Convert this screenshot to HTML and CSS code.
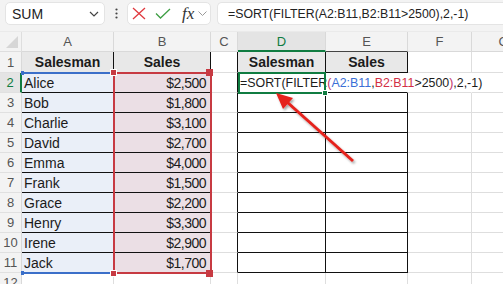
FILE: index.html
```html
<!DOCTYPE html>
<html>
<head>
<meta charset="utf-8">
<link rel="stylesheet" href="styles.css">
</head>
<body>
<div class="toolbar">
  <div class="namebox"><span>SUM</span>
    <svg width="10" height="6" viewBox="0 0 10 6"><path d="M1 1 L5 5 L9 1" fill="none" stroke="#444" stroke-width="1.2"/></svg>
  </div>
  <div class="dots"><svg width="3" height="11" viewBox="0 0 3 11"><circle cx="1.5" cy="1.5" r="1.1" fill="#444"/><circle cx="1.5" cy="5.5" r="1.1" fill="#444"/><circle cx="1.5" cy="9.5" r="1.1" fill="#444"/></svg></div>
  <div class="fbtns">
    <svg class="ic-x" width="14" height="13" viewBox="0 0 14 13"><path d="M1 1 L13 12 M13 1 L1 12" stroke="#e0393e" stroke-width="1.3" fill="none"/></svg>
    <svg class="ic-ok" width="16" height="11" viewBox="0 0 16 11"><path d="M1 5.5 L5.5 10 L15 1" stroke="#3f9f45" stroke-width="1.3" fill="none"/></svg>
    <span class="fx">fx</span>
    <svg class="ic-dd" width="9" height="5" viewBox="0 0 9 5"><path d="M0.5 0.5 L4.5 4.5 L8.5 0.5" fill="none" stroke="#9a9a9a" stroke-width="1"/></svg>
  </div>
  <div class="fbar">=SORT(FILTER(A2:B11,B2:B11&gt;2500),2,-1)</div>
</div>
<div class="band"></div>
<div class="stack">
<div class="sheet">
  <div class="corner"></div><div class="ch">A</div><div class="ch">B</div><div class="ch">C</div><div class="ch sel">D</div><div class="ch ch-e">E</div><div class="ch">F</div><div class="ch">G</div>

  <div class="rh">1</div><div class="hd">Salesman</div><div class="hd">Sales</div><div class="c cb"></div><div class="hd">Salesman</div><div class="hd">Sales</div><div class="c"></div><div class="c"></div>

  <div class="rh rsel">2</div><div class="na">Alice</div><div class="sa">$2,500</div><div class="c cb"></div><div class="tb d2"><span class="ftext">=SORT(FILTER<span class="pk">(</span><span class="bl">A2:B11</span>,<span class="rd">B2:B11</span>&gt;2500<span class="pk">)</span>,2,-1)</span></div><div class="tb nr"></div><div class="c nr"></div><div class="c"></div>

  <div class="rh">3</div><div class="na">Bob</div><div class="sa">$1,800</div><div class="c cb"></div><div class="tb"></div><div class="tb"></div><div class="c"></div><div class="c"></div>
  <div class="rh">4</div><div class="na">Charlie</div><div class="sa">$3,100</div><div class="c cb"></div><div class="tb"></div><div class="tb"></div><div class="c"></div><div class="c"></div>
  <div class="rh">5</div><div class="na">David</div><div class="sa">$2,700</div><div class="c cb"></div><div class="tb"></div><div class="tb"></div><div class="c"></div><div class="c"></div>
  <div class="rh">6</div><div class="na">Emma</div><div class="sa">$4,000</div><div class="c cb"></div><div class="tb"></div><div class="tb"></div><div class="c"></div><div class="c"></div>
  <div class="rh">7</div><div class="na">Frank</div><div class="sa">$1,500</div><div class="c cb"></div><div class="tb"></div><div class="tb"></div><div class="c"></div><div class="c"></div>
  <div class="rh">8</div><div class="na">Grace</div><div class="sa">$2,200</div><div class="c cb"></div><div class="tb"></div><div class="tb"></div><div class="c"></div><div class="c"></div>
  <div class="rh">9</div><div class="na">Henry</div><div class="sa">$3,300</div><div class="c cb"></div><div class="tb"></div><div class="tb"></div><div class="c"></div><div class="c"></div>
  <div class="rh">10</div><div class="na">Irene</div><div class="sa">$2,900</div><div class="c cb"></div><div class="tb"></div><div class="tb"></div><div class="c"></div><div class="c"></div>
  <div class="rh">11</div><div class="na">Jack</div><div class="sa">$1,700</div><div class="c cb"></div><div class="tb"></div><div class="tb"></div><div class="c"></div><div class="c"></div>

  <div class="rh">12</div><div class="c"></div><div class="c"></div><div class="c"></div><div class="c"></div><div class="c"></div><div class="c"></div><div class="c"></div>
</div>
<div class="overlay">
  <div class="ref-blue"></div>
  <div class="ref-red"></div>
  <div class="selbox"></div>
</div>
</div>
<svg class="arrow" width="503" height="284" viewBox="0 0 503 284">
  <defs>
    <filter id="sh" x="-20%" y="-20%" width="140%" height="140%">
      <feDropShadow dx="1.5" dy="2" stdDeviation="1" flood-color="#000" flood-opacity="0.35"/>
    </filter>
  </defs>
  <g filter="url(#sh)">
    <line x1="353" y1="161" x2="287" y2="102" stroke="#e5211c" stroke-width="3"/>
    <polygon points="276,93 293,98 283,109" fill="#e5211c"/>
  </g>
</svg>
</body>
</html>
```
FILE: styles.css
```css
html, body {
  margin: 0;
  padding: 0;
  background: #fff;
  overflow: hidden;
  width: 503px;
  height: 284px;
}
body {
  position: relative;
  font-family: "Liberation Sans", Arial, sans-serif;
  color: #1b1b1b;
}
.toolbar {
  display: flex;
  align-items: center;
  height: 27px;
  padding-left: 5px;
  background: #f3f3f3;
}
.namebox {
  width: 100px;
  height: 23px;
  box-sizing: border-box;
  background: #fff;
  border: 1px solid #e4e4e4;
  border-radius: 5px;
  display: flex;
  align-items: center;
  justify-content: space-between;
  padding: 0 5px 0 6px;
  font-size: 14px;
  color: #222;
}
.dots {
  width: 22px;
  display: flex;
  justify-content: center;
}
.fbtns {
  width: 84px;
  height: 23px;
  box-sizing: border-box;
  background: #fff;
  border: 1px solid #e4e4e4;
  border-radius: 5px;
  display: flex;
  align-items: center;
  padding-left: 4px;
}
.ic-x { margin-right: 9px; }
.ic-ok { margin-right: 11px; }
.fx {
  font-family: "Liberation Serif", serif;
  font-style: italic;
  font-size: 17px;
  color: #333;
  margin-right: 4px;
  line-height: 1;
}
.fbar {
  margin-left: 6px;
  flex: 1;
  height: 23px;
  box-sizing: border-box;
  background: #fff;
  border: 1px solid #e4e4e4;
  border-right: none;
  border-radius: 5px 0 0 5px;
  display: flex;
  align-items: center;
  padding-left: 10px;
  font-size: 12.3px;
  color: #222;
  white-space: nowrap;
}
.band {
  height: 5px;
  background: #f3f3f3;
  box-sizing: border-box;
  border-bottom: 1px solid #eaeaea;
}
.stack {
  display: grid;
  width: 536px;
}
.sheet, .overlay {
  grid-area: 1 / 1;
  display: grid;
  grid-template-columns: 22px 92px 97px 27px 88px 82px 64px 64px;
  grid-template-rows: 20px 21px repeat(10, 20px) 20px;
}
.overlay {
  pointer-events: none;
  position: relative;
  z-index: 3;
}
.sheet > div {
  box-sizing: border-box;
  border-right: 1px solid #dedede;
  border-bottom: 1px solid #dedede;
  min-width: 0;
}
.corner {
  background: #f3f3f3;
  position: relative;
}
.corner::after {
  content: "";
  position: absolute;
  right: 3px;
  bottom: 3px;
  width: 0;
  height: 0;
  border-left: 12px solid transparent;
  border-bottom: 12px solid #d6d6d6;
}
.ch {
  background: #f3f3f3;
  color: #555;
  font-size: 13px;
  display: flex;
  align-items: center;
  justify-content: center;
}
.sheet > .ch { border-right-color: #d9d9d9; border-bottom-color: #d9d9d9; }
.sheet > .ch.sel {
  color: #107c41;
  background: #e4e4e4;
  border-bottom: 2px solid #107c41;
}
.sheet > .ch.ch-e { border-bottom-color: #444; }
.rh {
  background: #f3f3f3;
  color: #555;
  font-size: 13px;
  display: flex;
  align-items: center;
  justify-content: center;
}
.sheet > .rh { border-right-color: #d9d9d9; border-bottom-color: #e0e0e0; }
.sheet > .rh.rsel {
  color: #107c41;
  background: #e4e4e4;
  border-right: 2px solid #107c41;
}
.sheet > .hd {
  background: #e8e8e8;
  font-weight: bold;
  font-size: 14px;
  display: flex;
  align-items: center;
  justify-content: center;
  border-right: 1px solid #111;
  border-bottom: 1px solid #111;
}
.sheet > .na {
  background: #eaeff8;
  font-size: 14px;
  display: flex;
  align-items: center;
  padding-left: 2px;
  border-right: 1px solid #111;
  border-bottom: 1px solid #111;
}
.sheet > .sa {
  background: #ebdfe5;
  font-size: 14px;
  letter-spacing: -0.5px;
  display: flex;
  align-items: center;
  justify-content: flex-end;
  padding-right: 4px;
  border-right: 1px solid #111;
  border-bottom: 1px solid #111;
}
.sheet > .cb { border-right: 1px solid #111; }
.sheet > .tb {
  border-right: 1px solid #111;
  border-bottom: 1px solid #111;
}
.sheet > .nr { border-right-color: transparent; }
.d2 {
  position: relative;
  z-index: 2;
  display: flex;
  align-items: center;
  overflow: visible;
}
.ftext {
  white-space: nowrap;
  font-size: 12.4px;
  padding-left: 2px;
  color: #1b1b1b;
}
.pk { color: #c0306a; }
.bl { color: #3b6fd6; }
.rd { color: #d22f45; }
.ref-blue {
  grid-column: 2 / 4;
  grid-row: 3 / 13;
  margin: -1px 0 -1px 0;
  border-top: 2px solid #3b6fc9;
  border-bottom: 2px solid #3b6fc9;
  position: relative;
}
.ref-blue::before, .ref-blue::after {
  content: "";
  position: absolute;
  left: -1px;
  width: 3px;
  height: 4px;
  background: #3b6fc9;
}
.ref-blue::before { top: -3px; }
.ref-blue::after { bottom: -3px; }
.ref-red {
  grid-column: 3 / 4;
  grid-row: 3 / 13;
  margin: -1px -1px -1px -1px;
  border: 2px solid #c73a42;
  position: relative;
}
.ref-red::before, .ref-red::after {
  content: "";
  position: absolute;
  width: 5px;
  height: 5px;
  background: #c73a42;
  border: 1px solid #fff;
}
.ref-red::before { left: -5px; top: -5px; box-shadow: 96px 0 0 0 #c73a42; }
.ref-red::after { left: -5px; bottom: -5px; box-shadow: 96px 0 0 0 #c73a42; }
.selbox {
  grid-column: 5 / 6;
  grid-row: 3 / 4;
  margin: -1px 0 -1px 0;
  border: 2px solid #107c41;
  position: relative;
}
.selbox::after {
  content: "";
  position: absolute;
  right: -4px;
  bottom: -4px;
  width: 4px;
  height: 4px;
  background: #107c41;
  border: 1px solid #fff;
}
.arrow {
  position: absolute;
  left: 0;
  top: 0;
  z-index: 10;
  pointer-events: none;
}
```
